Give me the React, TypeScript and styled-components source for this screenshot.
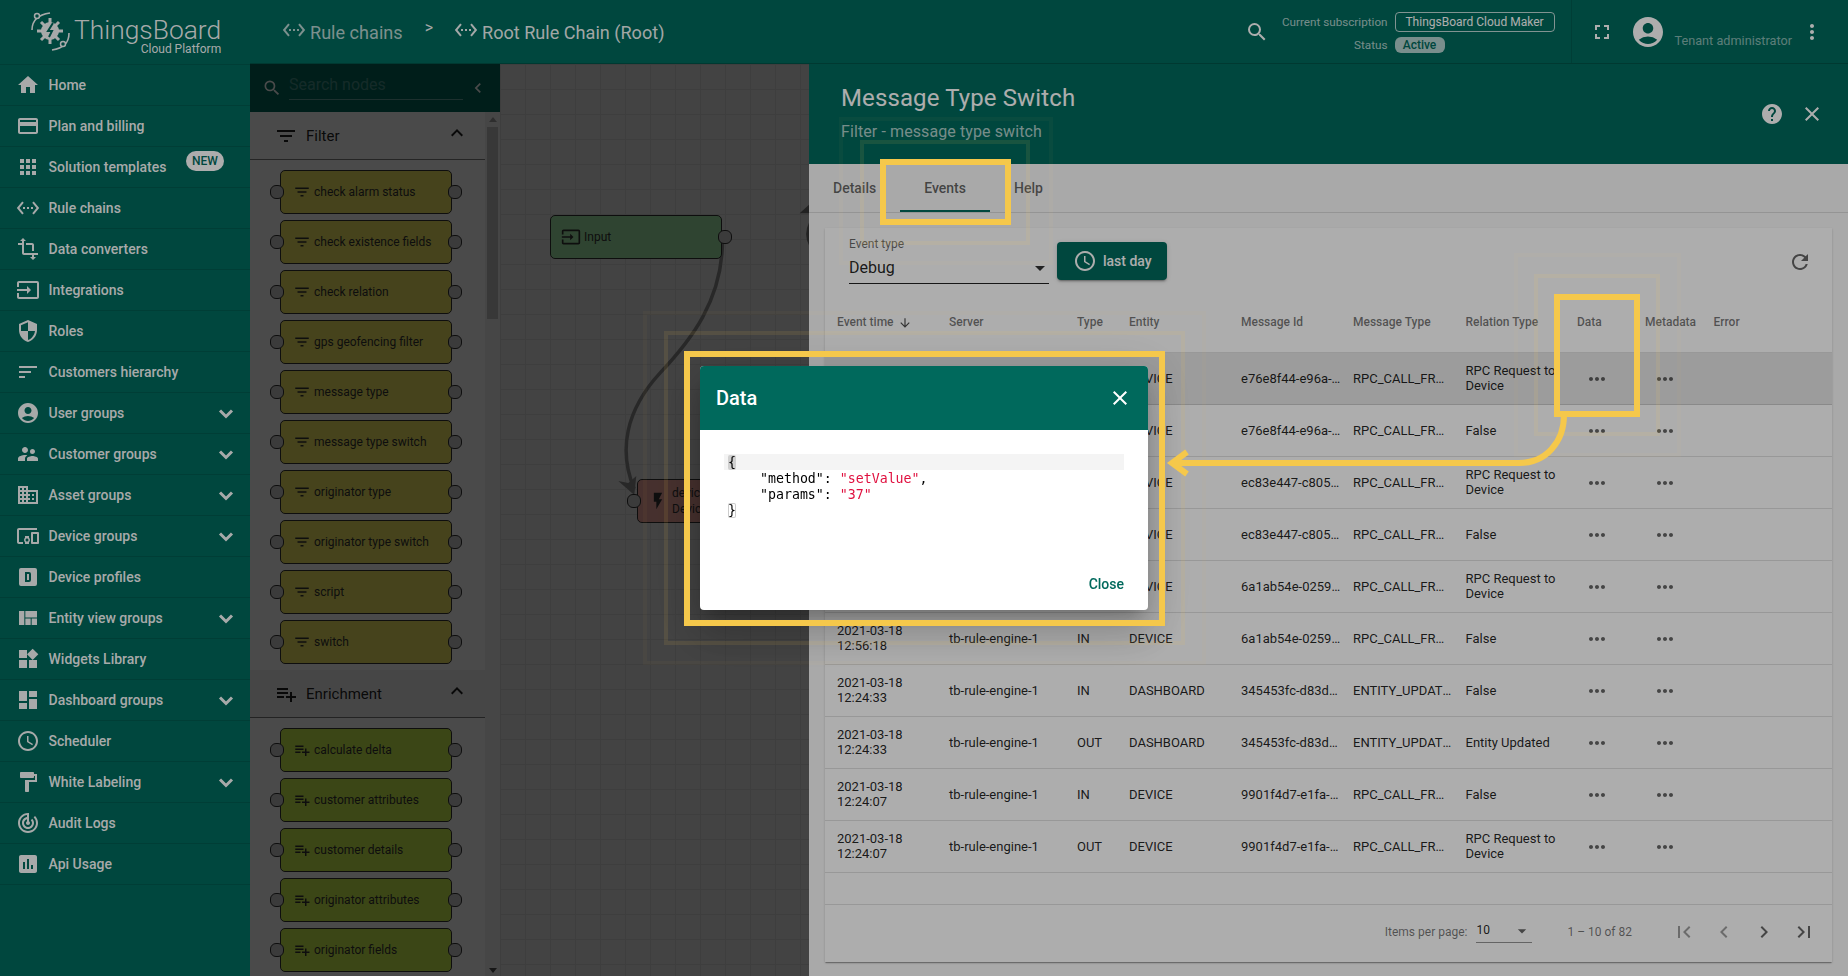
import type { ComponentType } from "react";
import styled, { createGlobalStyle } from "styled-components";
import {
  MdAccessTime,
  MdAccountCircle,
  MdApps,
  MdArrowDownward,
  MdArrowDropDown,
  MdChevronLeft,
  MdChevronRight,
  MdClose,
  MdCreditCard,
  MdDashboard,
  MdDevicesOther,
  MdDomain,
  MdExpandLess,
  MdFilterList,
  MdFirstPage,
  MdFormatPaint,
  MdFlashOn,
  MdFullscreen,
  MdHelp,
  MdHome,
  MdInput,
  MdInsertChart,
  MdLastPage,
  MdMoreHoriz,
  MdMoreVert,
  MdPlaylistAdd,
  MdRefresh,
  MdSchedule,
  MdSearch,
  MdSecurity,
  MdSettingsEthernet,
  MdSort,
  MdSupervisorAccount,
  MdTrackChanges,
  MdTransform,
  MdViewQuilt,
  MdWidgets,
} from "react-icons/md";

const GlobalStyle = createGlobalStyle`
  html, body {
    margin: 0;
    height: 100%;
    overflow: hidden;
    font-family: Roboto, "Helvetica Neue", sans-serif;
  }
  * { box-sizing: border-box; }
`;

const TEAL = "#00695c";
const YELLOW = "245, 200, 75";

const Shell = styled.div`
  display: grid;
  grid-template-columns: 250px 1fr;
  height: 976px;
  width: 1848px;
  overflow: hidden;
`;

/* sidebar */
const Sidebar = styled.aside`
  background: ${TEAL};
  display: flex;
  flex-direction: column;
  color: rgba(255, 255, 255, 0.97);
`;

const Logo = styled.div`
  height: 65px;
  flex: none;
  display: flex;
  padding: 10px 0 0 30px;
  border-bottom: 1px solid rgba(0, 0, 0, 0.12);
`;

const LogoText = styled.div`
  margin-left: 4px;
  display: flex;
  flex-direction: column;
  align-items: flex-end;
  font-weight: 300;
  font-size: 26.4px;
  line-height: 28px;
  margin-top: 6px;
`;

const LogoSub = styled.span`
  font-size: 12px;
  line-height: 14px;
  font-weight: 400;
  margin-top: -2px;
`;

const NavRow = styled.div`
  height: 41px;
  flex: none;
  display: flex;
  align-items: center;
  padding-left: 16px;
  padding-right: 12px;
  border-bottom: 1px solid rgba(0, 0, 0, 0.12);
  font-size: 14px;
  font-weight: 500;
  position: relative;
  svg {
    flex: none;
  }
`;

const NavLabel = styled.span`
  margin-left: 8.5px;
  flex: 1;
`;

const NewBadge = styled.span`
  position: absolute;
  left: 186px;
  top: 4px;
  width: 38px;
  height: 20px;
  border-radius: 10px;
  background: #fff;
  color: ${TEAL};
  font-size: 12px;
  font-weight: 500;
  line-height: 20px;
  text-align: center;
`;

/* top bar */
const Main = styled.div`
  display: flex;
  flex-direction: column;
  min-width: 0;
`;

const TopBar = styled.header`
  height: 64px;
  flex: none;
  background: ${TEAL};
  display: flex;
  align-items: center;
  padding: 0 24px 0 32px;
  color: #fff;
  border-bottom: 1px solid rgba(0, 0, 0, 0.2);
`;

const Crumb = styled.div<{ $dim?: boolean }>`
  display: flex;
  align-items: center;
  gap: 4px;
  margin-top: 2px;
  font-size: 18.1px;
  color: ${(p) => (p.$dim ? "rgba(255,255,255,.72)" : "rgba(255,255,255,.95)")};
  svg {
    margin-top: -5px;
  }
`;

const CrumbSep = styled.span`
  font-size: 16px;
  margin: -8px 21px 0 22px;
  color: rgba(255, 255, 255, 0.95);
`;

const TopRight = styled.div`
  margin-left: auto;
  display: flex;
  align-items: center;
  height: 100%;
`;

const SubscriptionGrid = styled.div`
  display: grid;
  grid-template-columns: auto 160px;
  column-gap: 7px;
  row-gap: 5px;
  margin-left: 13px;
  margin-top: 1px;
  font-size: 12px;
  align-items: center;
`;

const SubLabel = styled.span`
  text-align: right;
  font-size: 11.7px;
  color: rgba(255, 255, 255, 0.7);
`;

const PlanBox = styled.span`
  height: 20px;
  border: 1px solid rgba(255, 255, 255, 0.75);
  border-radius: 4px;
  line-height: 18px;
  text-align: center;
`;

const ActivePill = styled.span`
  justify-self: start;
  width: 50px;
  height: 16px;
  line-height: 16px;
  border-radius: 6px;
  background: #fff;
  opacity: 0.7;
  color: ${TEAL};
  font-weight: 500;
  text-align: center;
`;

const TopDivider = styled.div`
  width: 1px;
  height: 100%;
  background: rgba(0, 0, 0, 0.12);
  margin: 0 18px 0 16px;
`;

const TenantLabel = styled.span`
  font-size: 12.7px;
  color: rgba(255, 255, 255, 0.55);
  margin: 18px 8px 0 9px;
`;

const IconSlot = styled.span<{ $left?: number }>`
  display: inline-flex;
  margin-left: ${(p) => p.$left ?? 0}px;
`;

/* rule chain workspace */
const Workspace = styled.div`
  flex: 1;
  display: flex;
  position: relative;
  min-height: 0;
  &::after {
    content: "";
    position: absolute;
    inset: 0;
    background: rgba(0, 0, 0, 0.57);
  }
`;

const NodePanel = styled.div`
  width: 250px;
  flex: none;
  background: #fff;
  display: flex;
  flex-direction: column;
  overflow: hidden;
  position: relative;
`;

const NodeSearch = styled.div`
  height: 48px;
  flex: none;
  background: ${TEAL};
  display: flex;
  align-items: center;
  padding-left: 12px;
  color: #fff;
`;

const NodeSearchText = styled.div`
  width: 174px;
  height: 28px;
  margin: -5px 5px 0 7px;
  border-bottom: 1px solid rgba(255, 255, 255, 0.4);
  font-size: 16px;
  line-height: 26px;
  color: rgba(255, 255, 255, 0.3);
`;

const PanelScroll = styled.div`
  width: 235px;
`;

const ScrollRail = styled.div`
  position: absolute;
  right: 0;
  top: 48px;
  bottom: 0;
  width: 15px;
  background: #f1f1f1;
  display: flex;
  flex-direction: column;
  align-items: center;
  padding: 5px 0;
`;

const ScrollThumb = styled.div`
  width: 11px;
  height: 192px;
  margin-top: 5px;
  background: #c1c1c1;
`;

const ScrollArrow = styled.span<{ $down?: boolean }>`
  width: 0;
  height: 0;
  border-left: 4px solid transparent;
  border-right: 4px solid transparent;
  ${(p) =>
    p.$down
      ? "border-top: 5px solid #505050; margin-top: auto;"
      : "border-bottom: 5px solid #a0a0a0;"}
`;

const SectionHead = styled.div<{ $active?: boolean }>`
  height: 48px;
  display: flex;
  align-items: center;
  padding: 0 16px 0 24px;
  font-size: 15px;
  color: rgba(0, 0, 0, 0.87);
  border-bottom: 1px solid rgba(0, 0, 0, 0.5);
  background: ${(p) => (p.$active ? "#f0f0f0" : "transparent")};
  svg:last-child {
    margin-top: -5px;
  }
`;

const SectionName = styled.span`
  margin-left: 8px;
  flex: 1;
`;

const SectionBody = styled.div`
  padding: 10px 0 6px 30px;
  display: flex;
  flex-direction: column;
  gap: 6px;
`;

const toneColors = {
  filter: "#f1e861",
  enrichment: "#cdf14e",
  input: "#a3eaa9",
  action: "#f1a89f",
};

const RuleNode = styled.div<{ $tone: keyof typeof toneColors }>`
  position: relative;
  width: 172px;
  height: 44px;
  flex: none;
  background: ${(p) => toneColors[p.$tone]};
  border: 1px solid #333;
  border-radius: 5px;
  display: flex;
  align-items: center;
  padding-left: 12px;
  font-size: 12px;
  color: #333;
`;

const NodeText = styled.span`
  margin-left: 3px;
`;

const Connector = styled.span<{ $side: "left" | "right" }>`
  position: absolute;
  top: 14px;
  ${(p) => (p.$side === "left" ? "left: -11px;" : "right: -11px;")}
  width: 14px;
  height: 14px;
  border: 1px solid #333;
  border-radius: 6px;
  background: #ccc;
`;

const Canvas = styled.div`
  flex: 1;
  position: relative;
  background-color: #e6e6e6;
  background-image: linear-gradient(#d6d6d6 1px, transparent 1px),
    linear-gradient(90deg, #d6d6d6 1px, transparent 1px);
  background-size: 25px 25px;
`;

const CanvasNode = styled(RuleNode)<{ $x: number; $y: number }>`
  position: absolute;
  left: ${(p) => p.$x}px;
  top: ${(p) => p.$y}px;
  padding-left: 10px;
`;

const DeviceText = styled.span`
  margin-left: 4px;
  line-height: 16px;
`;

const EdgeLayer = styled.svg`
  position: absolute;
  left: 0;
  top: 0;
  width: 100%;
  height: 100%;
`;

/* details drawer */
const Drawer = styled.section`
  position: absolute;
  top: 0;
  right: 0;
  bottom: 0;
  width: 1039px;
  z-index: 2;
  background: #fafafa;
  display: flex;
  flex-direction: column;
`;

const DrawerHead = styled.div`
  height: 100px;
  flex: none;
  background: ${TEAL};
  color: #fff;
  padding: 0 24px 0 32px;
  display: flex;
  align-items: center;
  justify-content: space-between;
`;

const DrawerTitle = styled.h1`
  margin: -3px 0 0;
  font-size: 24px;
  line-height: 28px;
  font-weight: 400;
  letter-spacing: 0.12px;
`;

const DrawerSubtitle = styled.div`
  margin-top: 10px;
  font-size: 16px;
  line-height: 20px;
  letter-spacing: 0.1px;
  color: rgba(255, 255, 255, 0.7);
`;

const DrawerActions = styled.div`
  display: flex;
  gap: 16px;
`;

const Tabs = styled.nav`
  height: 49px;
  flex: none;
  display: flex;
  border-bottom: 1px solid rgba(0, 0, 0, 0.12);
`;

const Tab = styled.div<{ $active?: boolean }>`
  height: 48px;
  padding: 0 24px;
  display: flex;
  align-items: center;
  font-size: 14px;
  font-weight: 500;
  color: rgba(0, 0, 0, ${(p) => (p.$active ? 0.62 : 0.6)});
  box-shadow: ${(p) => (p.$active ? `inset 0 -2px 0 ${TEAL}` : "none")};
`;

const Card = styled.div`
  flex: 1;
  margin: 15px 16px 16px;
  background: #fff;
  display: flex;
  flex-direction: column;
  box-shadow: 0 2px 1px -1px rgba(0, 0, 0, 0.2), 0 1px 1px 0 rgba(0, 0, 0, 0.14),
    0 1px 3px 0 rgba(0, 0, 0, 0.12);
  min-height: 0;
`;

const FilterBar = styled.div`
  height: 64px;
  flex: none;
  display: flex;
  align-items: flex-start;
  padding: 9px 20px 0 24px;
`;

const SelectField = styled.div`
  width: 200px;
  height: 47px;
  border-bottom: 1px solid rgba(0, 0, 0, 0.87);
  position: relative;
`;

const SelectLabel = styled.div`
  font-size: 12px;
  line-height: 14px;
  color: rgba(0, 0, 0, 0.6);
`;

const SelectValue = styled.div`
  font-size: 16px;
  line-height: 20px;
  margin-top: 7px;
  color: rgba(0, 0, 0, 0.87);
`;

const SelectArrow = styled.span`
  position: absolute;
  right: -3px;
  top: 19px;
  display: flex;
  color: rgba(0, 0, 0, 0.8);
`;

const TimeButton = styled.button`
  margin: 5px 0 0 8px;
  width: 110px;
  height: 38px;
  border: 0;
  border-radius: 4px;
  background: ${TEAL};
  color: #fff;
  font: 500 14px Roboto, sans-serif;
  display: flex;
  align-items: center;
  gap: 6px;
  padding: 0 0 0 16px;
  box-shadow: 0 3px 1px -2px rgba(0, 0, 0, 0.2), 0 2px 2px 0 rgba(0, 0, 0, 0.14),
    0 1px 5px 0 rgba(0, 0, 0, 0.12);
`;

const RefreshSlot = styled.span`
  margin: 13px 0 0 auto;
  display: flex;
  color: rgba(0, 0, 0, 0.6);
`;

const tableColumns = "112px 128px 52px 112px 112px 112.5px 111.5px 68px 68.5px 1fr";

const TableHead = styled.div`
  height: 61px;
  flex: none;
  display: grid;
  grid-template-columns: ${tableColumns};
  align-items: center;
  padding: 0 0 1px 12px;
  font-size: 12px;
  font-weight: 500;
  color: rgba(0, 0, 0, 0.54);
  border-bottom: 1px solid rgba(0, 0, 0, 0.12);
`;

const SortHead = styled.span`
  display: flex;
  align-items: center;
  gap: 4px;
  svg {
    margin-top: 2px;
    color: rgba(0, 0, 0, 0.7);
  }
`;

const TableRow = styled.div<{ $selected?: boolean }>`
  height: 52px;
  flex: none;
  display: grid;
  grid-template-columns: ${tableColumns};
  align-items: center;
  padding-left: 12px;
  font-size: 13px;
  line-height: 15px;
  color: rgba(0, 0, 0, 0.87);
  background: ${(p) => (p.$selected ? "#e6e6e6" : "transparent")};
  border-bottom: 1px solid rgba(0, 0, 0, 0.12);
`;

const Cell = styled.div<{ $twoLine?: boolean }>`
  padding-right: 12px;
  padding-bottom: ${(p) => (p.$twoLine ? 2 : 0)}px;
`;

const ClipCell = styled(Cell)<{ $pad?: number }>`
  white-space: nowrap;
  overflow: hidden;
  text-overflow: ellipsis;
  padding-right: ${(p) => p.$pad ?? 12}px;
`;

const DotsCell = styled.div`
  display: flex;
  padding-left: 8px;
  color: rgba(0, 0, 0, 0.6);
`;

const TableFiller = styled.div`
  flex: 1;
  border-bottom: 1px solid rgba(0, 0, 0, 0.12);
`;

const Pager = styled.div`
  height: 57px;
  flex: none;
  display: flex;
  align-items: center;
  justify-content: flex-end;
  padding: 0 8px 4px 0;
  font-size: 12px;
  color: rgba(0, 0, 0, 0.54);
`;

const PageSize = styled.div`
  width: 56px;
  height: 23px;
  margin: 0 35px 0 9px;
  border-bottom: 1px solid rgba(0, 0, 0, 0.42);
  display: flex;
  justify-content: space-between;
  line-height: 21px;
  color: rgba(0, 0, 0, 0.87);
  svg {
    margin: 1px 0 0 0;
    color: rgba(0, 0, 0, 0.6);
  }
`;

const PageButtons = styled.div`
  display: flex;
  margin-left: 32px;
`;

const PageButton = styled.span<{ $off?: boolean }>`
  width: 40px;
  height: 40px;
  display: flex;
  align-items: center;
  justify-content: center;
  color: rgba(0, 0, 0, ${(p) => (p.$off ? 0.38 : 0.6)});
`;

/* dialog above everything */
const Backdrop = styled.div`
  position: fixed;
  inset: 0;
  z-index: 10;
  background: rgba(0, 0, 0, 0.32);
  display: flex;
  align-items: center;
  justify-content: center;
`;

const Dialog = styled.div`
  width: 448px;
  height: 244px;
  background: #fff;
  border-radius: 4px;
  overflow: hidden;
  display: flex;
  flex-direction: column;
  box-shadow: 0 11px 15px -7px rgba(0, 0, 0, 0.2), 0 24px 38px 3px rgba(0, 0, 0, 0.14),
    0 9px 46px 8px rgba(0, 0, 0, 0.12);
`;

const DialogHead = styled.div`
  height: 64px;
  flex: none;
  background: ${TEAL};
  color: #fff;
  display: flex;
  align-items: center;
  justify-content: space-between;
  padding: 0 16px;
  font-size: 20px;
  font-weight: 500;
`;

const CodeArea = styled.div`
  flex: 1;
  margin: 24px 24px 0;
  font-family: "DejaVu Sans Mono", monospace;
  font-size: 13.25px;
  line-height: 17px;
  color: #000;
`;

const CodeLine = styled.div<{ $active?: boolean; $indent?: number }>`
  height: 16px;
  white-space: pre;
  padding-left: ${(p) => (p.$indent ?? 0) * 8 + 4}px;
  background: ${(p) => (p.$active ? "#f4f4f4" : "transparent")};
`;

const CodeString = styled.span`
  color: #e0103f;
`;

const Bracket = styled.span<{ $cursor?: boolean }>`
  border-radius: 2px;
  background: ${(p) => (p.$cursor ? "#d0d0d0" : "transparent")};
  box-shadow: ${(p) => (p.$cursor ? "none" : "inset 0 0 0 1px #ccc")};
`;

const DialogActions = styled.div`
  display: flex;
  justify-content: flex-end;
  padding: 0 24px 18px;
  font-size: 14px;
  font-weight: 500;
  color: ${TEAL};
`;

/* tutorial annotations drawn on the screenshot */
const Frame = styled.div<{ $x: number; $y: number; $w: number; $h: number; $level: number }>`
  position: fixed;
  z-index: 20;
  left: ${(p) => p.$x}px;
  top: ${(p) => p.$y}px;
  width: ${(p) => p.$w}px;
  height: ${(p) => p.$h}px;
  pointer-events: none;
  border: ${(p) => (p.$level === 0 ? 6 : 4)}px solid
    rgba(${YELLOW}, ${(p) => [1, 0.1, 0.035][p.$level]});
`;

const Arrow = styled.svg`
  position: fixed;
  z-index: 21;
  left: 0;
  top: 0;
  width: 1848px;
  height: 976px;
  pointer-events: none;
`;

type NavItem = { label: string; icon: ComponentType<{ size?: number }>; more?: boolean; badge?: boolean };

const DeviceProfileIcon = ({ size }: { size?: number }) => (
  <svg width={size} height={size} viewBox="0 0 24 24" fill="currentColor">
    <path d="M9,7V17H13A2,2 0 0,0 15,15V9A2,2 0 0,0 13,7H9M11,9H13V15H11V9M5,3H19A2,2 0 0,1 21,5V19A2,2 0 0,1 19,21H5A2,2 0 0,1 3,19V5A2,2 0 0,1 5,3Z" />
  </svg>
);

const NavChevron = () => (
  <svg width="24" height="24" viewBox="0 0 24 24" fill="none" stroke="currentColor" strokeWidth="3">
    <path d="M6 9.500l6 6 6-6" />
  </svg>
);

const navItems: NavItem[] = [
  { label: "Home", icon: MdHome },
  { label: "Plan and billing", icon: MdCreditCard },
  { label: "Solution templates", icon: MdApps, badge: true },
  { label: "Rule chains", icon: MdSettingsEthernet },
  { label: "Data converters", icon: MdTransform },
  { label: "Integrations", icon: MdInput },
  { label: "Roles", icon: MdSecurity },
  { label: "Customers hierarchy", icon: MdSort },
  { label: "User groups", icon: MdAccountCircle, more: true },
  { label: "Customer groups", icon: MdSupervisorAccount, more: true },
  { label: "Asset groups", icon: MdDomain, more: true },
  { label: "Device groups", icon: MdDevicesOther, more: true },
  { label: "Device profiles", icon: DeviceProfileIcon },
  { label: "Entity view groups", icon: MdViewQuilt, more: true },
  { label: "Widgets Library", icon: MdWidgets },
  { label: "Dashboard groups", icon: MdDashboard, more: true },
  { label: "Scheduler", icon: MdSchedule },
  { label: "White Labeling", icon: MdFormatPaint, more: true },
  { label: "Audit Logs", icon: MdTrackChanges },
  { label: "Api Usage", icon: MdInsertChart },
];

const filterNodes = [
  "check alarm status",
  "check existence fields",
  "check relation",
  "gps geofencing filter",
  "message type",
  "message type switch",
  "originator type",
  "originator type switch",
  "script",
  "switch",
];

const enrichmentNodes = [
  "calculate delta",
  "customer attributes",
  "customer details",
  "originator attributes",
  "originator fields",
];

const RPC = "RPC_CALL_FROM_DEVICE";
const ENTITY = "ENTITY_UPDATED";
const REQ = "RPC Request to Device";

const events = [
  ["2021-03-18 13:02:11", "OUT", "DEVICE", "e76e8f44-e96a-11eb", RPC, REQ],
  ["2021-03-18 13:02:11", "IN", "DEVICE", "e76e8f44-e96a-11eb", RPC, "False"],
  ["2021-03-18 12:58:40", "OUT", "DEVICE", "ec83e447-c805-11eb", RPC, REQ],
  ["2021-03-18 12:58:40", "IN", "DEVICE", "ec83e447-c805-11eb", RPC, "False"],
  ["2021-03-18 12:56:18", "OUT", "DEVICE", "6a1ab54e-0259-11eb", RPC, REQ],
  ["2021-03-18 12:56:18", "IN", "DEVICE", "6a1ab54e-0259-11eb", RPC, "False"],
  ["2021-03-18 12:24:33", "IN", "DASHBOARD", "345453fc-d83d-11eb", ENTITY, "False"],
  ["2021-03-18 12:24:33", "OUT", "DASHBOARD", "345453fc-d83d-11eb", ENTITY, "Entity Updated"],
  ["2021-03-18 12:24:07", "IN", "DEVICE", "9901f4d7-e1fa-11eb", RPC, "False"],
  ["2021-03-18 12:24:07", "OUT", "DEVICE", "9901f4d7-e1fa-11eb", RPC, REQ],
];

const frames = [
  [880, 159, 131, 66, 0],
  [860, 140, 170, 105, 1],
  [839, 117, 214, 148, 2],
  [1554, 294, 86, 123, 0],
  [1534, 274, 126, 162, 1],
  [1514, 253, 167, 204, 2],
  [684, 351, 481, 275, 0],
  [664, 331, 521, 314, 1],
  [643, 311, 563, 354, 2],
];

function LogoMark() {
  return (
    <svg width="40" height="42" viewBox="0 0 40 42" fill="none" stroke="currentColor">
      <circle cx="20" cy="21" r="9" fill="currentColor" stroke="none" />
      <path
        strokeWidth="3"
        d="M20 8v5M20 29v5M7 21h5M28 21h5M11 12l3.5 3.5M25.500 26.500l3.500 3.500M29 12l-3.500 3.500M14.500 26.500L11 30"
      />
      <path d="M23 13l-5 8h4l-3 6" stroke="#00695c" strokeWidth="2" />
      <path d="M2 20C2 12 6 5 20 3" strokeWidth="1.600" />
      <circle cx="7" cy="6" r="2.500" strokeWidth="1.500" fill="#00695c" />
      <path d="M39 23C39 32 35 38 22 40" strokeWidth="1.600" />
      <circle cx="33" cy="34" r="2.500" strokeWidth="1.500" fill="#00695c" />
    </svg>
  );
}

function PaletteNode({ tone, label }: { tone: "filter" | "enrichment"; label: string }) {
  const Icon = tone === "filter" ? MdFilterList : MdPlaylistAdd;
  return (
    <RuleNode $tone={tone}>
      <Connector $side="left" />
      <Icon size={18} />
      <NodeText>{label}</NodeText>
      <Connector $side="right" />
    </RuleNode>
  );
}

export default function App() {
  return (
    <>
      <GlobalStyle />
      <Shell>
        <Sidebar>
          <Logo>
            <LogoMark />
            <LogoText>
              ThingsBoard
              <LogoSub>Cloud Platform</LogoSub>
            </LogoText>
          </Logo>
          {navItems.map((item) => (
            <NavRow key={item.label}>
              <item.icon size={24} />
              <NavLabel>{item.label}</NavLabel>
              {item.badge && <NewBadge>NEW</NewBadge>}
              {item.more && <NavChevron />}
            </NavRow>
          ))}
        </Sidebar>

        <Main>
          <TopBar>
            <Crumb $dim>
              <MdSettingsEthernet size={24} />
              Rule chains
            </Crumb>
            <CrumbSep>&gt;</CrumbSep>
            <Crumb>
              <MdSettingsEthernet size={24} />
              Root Rule Chain (Root)
            </Crumb>
            <TopRight>
              <MdSearch size={24} />
              <SubscriptionGrid>
                <SubLabel>Current subscription</SubLabel>
                <PlanBox>ThingsBoard Cloud Maker</PlanBox>
                <SubLabel>Status</SubLabel>
                <ActivePill>Active</ActivePill>
              </SubscriptionGrid>
              <TopDivider />
              <MdFullscreen size={24} />
              <IconSlot $left={16}>
                <MdAccountCircle size={36} />
              </IconSlot>
              <TenantLabel>Tenant administrator</TenantLabel>
              <MdMoreVert size={24} />
            </TopRight>
          </TopBar>

          <Workspace>
            <NodePanel>
              <NodeSearch>
                <MdSearch size={20} />
                <NodeSearchText>Search nodes</NodeSearchText>
                <MdChevronLeft size={20} />
              </NodeSearch>
              <PanelScroll>
                <SectionHead>
                  <MdFilterList size={24} />
                  <SectionName>Filter</SectionName>
                  <MdExpandLess size={24} />
                </SectionHead>
                <SectionBody>
                  {filterNodes.map((label) => (
                    <PaletteNode key={label} tone="filter" label={label} />
                  ))}
                </SectionBody>
                <SectionHead $active>
                  <MdPlaylistAdd size={24} />
                  <SectionName>Enrichment</SectionName>
                  <MdExpandLess size={24} />
                </SectionHead>
                <SectionBody>
                  {enrichmentNodes.map((label) => (
                    <PaletteNode key={label} tone="enrichment" label={label} />
                  ))}
                </SectionBody>
              </PanelScroll>
              <ScrollRail>
                <ScrollArrow />
                <ScrollThumb />
                <ScrollArrow $down />
              </ScrollRail>
            </NodePanel>

            <Canvas>
              <EdgeLayer viewBox="500 64 1348 912" preserveAspectRatio="xMinYMin slice">
                <path
                  d="M722 240C722 300 690 340 660 372C625 410 618 450 634 488"
                  fill="none"
                  stroke="#8a8a8a"
                  strokeWidth="3.500"
                />
                <path d="M634 494L618 480L628 482L636 475Z" fill="#8a8a8a" />
                <path d="M799 213L810 203V213Z" fill="#777" />
                <path d="M810 222C806 230 806 238 810 245" fill="none" stroke="#777" strokeWidth="3" />
              </EdgeLayer>
              <CanvasNode $tone="input" $x={50} $y={151}>
                <MdInput size={20} />
                <NodeText>Input</NodeText>
                <Connector $side="right" />
              </CanvasNode>
              <CanvasNode $tone="action" $x={137} $y={415}>
                <Connector $side="left" />
                <MdFlashOn size={20} />
                <DeviceText>
                  device
                  <br />
                  Device
                </DeviceText>
              </CanvasNode>
            </Canvas>

            <Drawer>
              <DrawerHead>
                <div>
                  <DrawerTitle>Message Type Switch</DrawerTitle>
                  <DrawerSubtitle>Filter - message type switch</DrawerSubtitle>
                </div>
                <DrawerActions>
                  <MdHelp size={24} />
                  <MdClose size={24} />
                </DrawerActions>
              </DrawerHead>
              <Tabs>
                <Tab>Details</Tab>
                <Tab $active>Events</Tab>
                <Tab>Help</Tab>
              </Tabs>
              <Card>
                <FilterBar>
                  <SelectField>
                    <SelectLabel>Event type</SelectLabel>
                    <SelectValue>Debug</SelectValue>
                    <SelectArrow>
                      <MdArrowDropDown size={24} />
                    </SelectArrow>
                  </SelectField>
                  <TimeButton>
                    <MdAccessTime size={24} />
                    last day
                  </TimeButton>
                  <RefreshSlot>
                    <MdRefresh size={24} />
                  </RefreshSlot>
                </FilterBar>
                <TableHead>
                  <SortHead>
                    Event time
                    <MdArrowDownward size={14} />
                  </SortHead>
                  <span>Server</span>
                  <span>Type</span>
                  <span>Entity</span>
                  <span>Message Id</span>
                  <span>Message Type</span>
                  <span>Relation Type</span>
                  <span>Data</span>
                  <span>Metadata</span>
                  <span>Error</span>
                </TableHead>
                {events.map(([time, type, entity, id, msg, relation], i) => (
                  <TableRow key={i} $selected={i === 0}>
                    <Cell $twoLine>{time}</Cell>
                    <Cell>tb-rule-engine-1</Cell>
                    <Cell>{type}</Cell>
                    <Cell>{entity}</Cell>
                    <ClipCell>{id}</ClipCell>
                    <ClipCell $pad={13}>{msg}</ClipCell>
                    <Cell $twoLine={relation === REQ}>{relation}</Cell>
                    <DotsCell>
                      <MdMoreHoriz size={24} />
                    </DotsCell>
                    <DotsCell>
                      <MdMoreHoriz size={24} />
                    </DotsCell>
                  </TableRow>
                ))}
                <TableFiller />
                <Pager>
                  Items per page:
                  <PageSize>
                    10
                    <MdArrowDropDown size={20} />
                  </PageSize>
                  1 – 10 of 82
                  <PageButtons>
                    <PageButton $off>
                      <MdFirstPage size={24} />
                    </PageButton>
                    <PageButton $off>
                      <MdChevronLeft size={24} />
                    </PageButton>
                    <PageButton>
                      <MdChevronRight size={24} />
                    </PageButton>
                    <PageButton>
                      <MdLastPage size={24} />
                    </PageButton>
                  </PageButtons>
                </Pager>
              </Card>
            </Drawer>
          </Workspace>
        </Main>
      </Shell>

      <Backdrop>
        <Dialog>
          <DialogHead>
            Data
            <MdClose size={24} />
          </DialogHead>
          <CodeArea>
            <CodeLine $active>
              <Bracket $cursor>{"{"}</Bracket>
            </CodeLine>
            <CodeLine $indent={4}>
              "method": <CodeString>"setValue"</CodeString>,
            </CodeLine>
            <CodeLine $indent={4}>
              "params": <CodeString>"37"</CodeString>
            </CodeLine>
            <CodeLine>
              <Bracket>{"}"}</Bracket>
            </CodeLine>
          </CodeArea>
          <DialogActions>Close</DialogActions>
        </Dialog>
      </Backdrop>

      {frames.map(([x, y, w, h, level], i) => (
        <Frame key={i} $x={x} $y={y} $w={w} $h={h} $level={level} />
      ))}
      <Arrow viewBox="0 0 1848 976">
        <path
          d="M1564 415C1564 442 1546 463 1519 463H1174M1187 452L1172 463L1187 474"
          fill="none"
          stroke={`rgb(${YELLOW})`}
          strokeWidth="6"
        />
      </Arrow>
    </>
  );
}
